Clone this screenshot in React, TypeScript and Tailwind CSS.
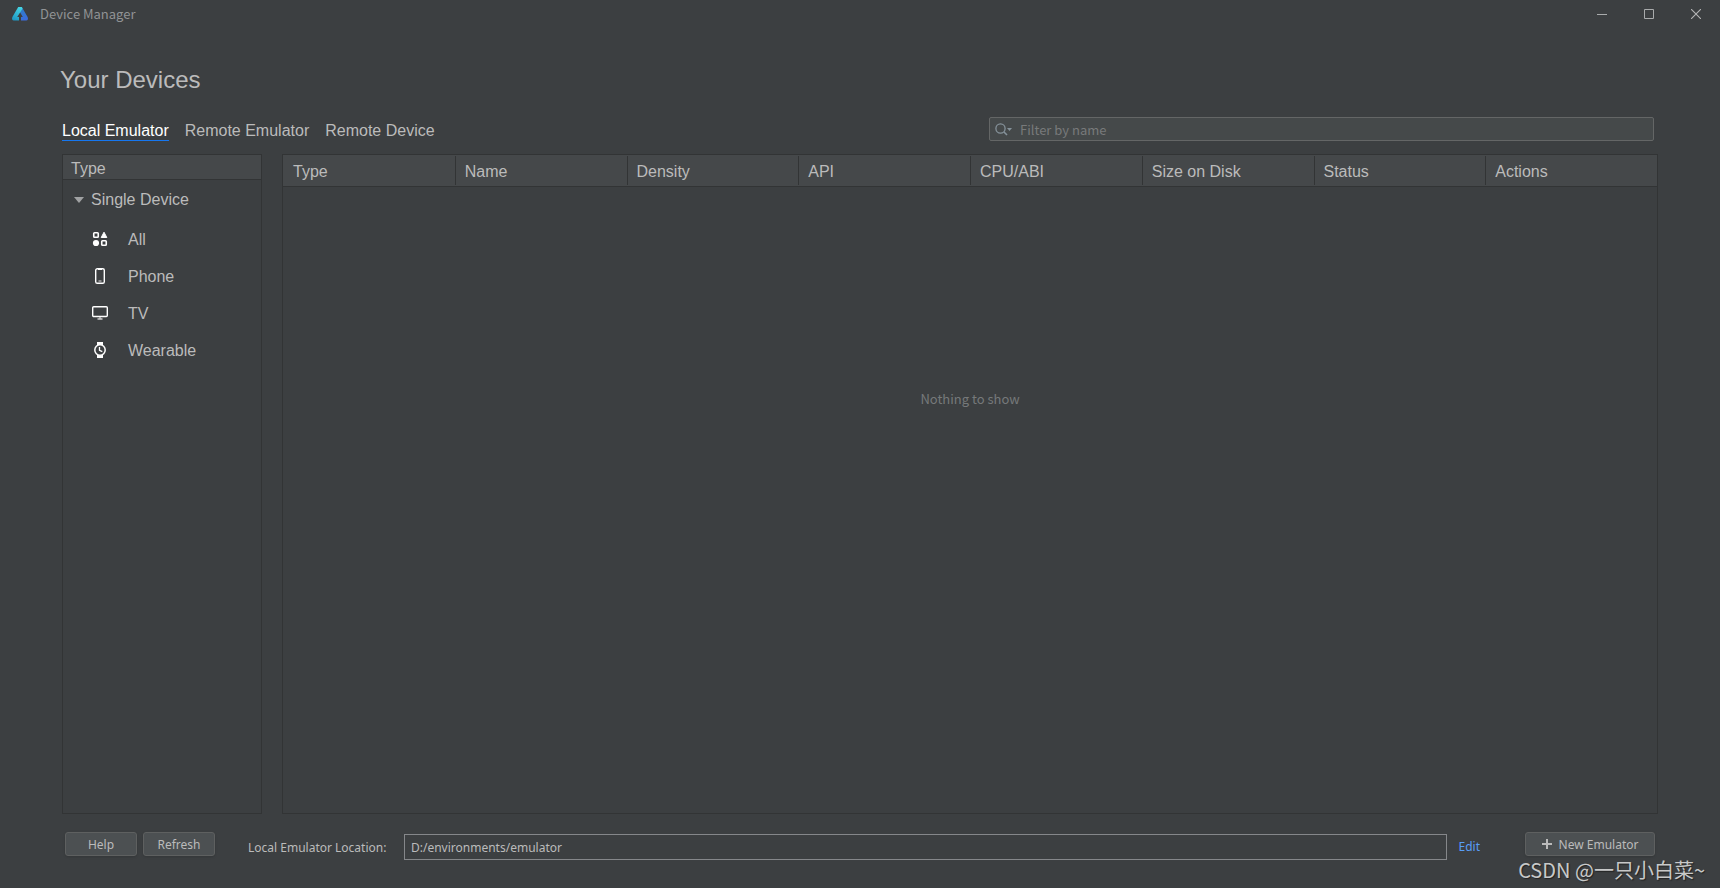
import React, { useState } from 'react'

interface DeviceType {
  name: string
  icon: React.ReactNode
}

const tabs = ['Local Emulator', 'Remote Emulator', 'Remote Device']

const columns = [
  'Type',
  'Name',
  'Density',
  'API',
  'CPU/ABI',
  'Size on Disk',
  'Status',
  'Actions',
]

const deviceTypes: DeviceType[] = [
  {
    name: 'All',
    icon: (
      <svg width="16" height="16" viewBox="0 0 16 16" fill="none">
        <rect x="1.75" y="1.75" width="4.5" height="4.5" rx="0.8" stroke="#fff" strokeWidth="1.6" />
        <path d="M12 1.2 14.8 6.5H9.2Z" fill="#fff" stroke="#fff" strokeWidth="1" strokeLinejoin="round" />
        <circle cx="4" cy="12" r="3.1" fill="#fff" />
        <rect x="9.75" y="9.75" width="4.5" height="4.5" rx="0.8" stroke="#fff" strokeWidth="1.6" />
      </svg>
    ),
  },
  {
    name: 'Phone',
    icon: (
      <svg width="16" height="16" viewBox="0 0 16 16" fill="none">
        <rect x="3.7" y="0.7" width="8.6" height="14.6" rx="1.6" stroke="#fff" strokeWidth="1.4" />
        <path d="M6 1.5h4" stroke="#fff" />
        <path d="M6.5 13h3" stroke="#aaa" strokeWidth="1.5" />
      </svg>
    ),
  },
  {
    name: 'TV',
    icon: (
      <svg width="16" height="16" viewBox="0 0 16 16" fill="none">
        <rect x="0.7" y="1.7" width="14.6" height="9.8" rx="1" stroke="#fff" strokeWidth="1.4" />
        <path d="M8 12v2M5.5 14h5" stroke="#ccc" strokeWidth="1.4" />
      </svg>
    ),
  },
  {
    name: 'Wearable',
    icon: (
      <svg width="16" height="16" viewBox="0 0 16 16" fill="none">
        <path d="M5 0h6v4H5ZM5 12h6v4H5Z" fill="#fff" />
        <circle cx="8" cy="8" r="5.2" fill="#3c3f41" stroke="#fff" strokeWidth="1.5" />
        <path d="M7.5 5v3.3l2.8 1.3" stroke="#fff" strokeWidth="1.3" />
      </svg>
    ),
  },
]

const Logo = () => (
  <svg width="16" height="14" viewBox="0 0 16 14" fill="none">
    <defs>
      <linearGradient id="left" x1="8" y1="0" x2="2" y2="14" gradientUnits="userSpaceOnUse">
        <stop stopColor="#46d6e4" />
        <stop offset="1" stopColor="#1c93c0" />
      </linearGradient>
      <linearGradient id="right" x1="9" y1="1" x2="14" y2="14" gradientUnits="userSpaceOnUse">
        <stop stopColor="#2c7fc4" />
        <stop offset="1" stopColor="#3d6ae0" />
      </linearGradient>
    </defs>
    <path d="M9.8 0 15.6 10 16 11.6Q16 13.4 14.4 13.6H9V10h1.8L7.6 4.6Z" fill="url(#right)" />
    <path d="M6.2 0h3.6L10.6 1.4 8.4 5 5.2 10H7v3.6H1.6Q0 13.4 0 11.6L.4 10Z" fill="url(#left)" />
  </svg>
)

const TitleBar = () => (
  <header className="flex h-7 items-center pr-px pl-3 text-[#919395]">
    <Logo />
    <span className="ml-3 grow">Device Manager</span>
    <button aria-label="Minimize" className="flex h-7 w-[47px] items-center justify-center">
      <svg width="10" height="10" viewBox="0 0 10 10">
        <path d="M0 5.5h10" stroke="#a9abac" />
      </svg>
    </button>
    <button aria-label="Maximize" className="flex h-7 w-[47px] items-center justify-center">
      <svg width="10" height="10" viewBox="0 0 10 10">
        <path d="M.5.5h9v9h-9Z" fill="none" stroke="#a9abac" />
      </svg>
    </button>
    <button aria-label="Close" className="flex h-7 w-[47px] items-center justify-center">
      <svg width="10" height="10" viewBox="0 0 10 10">
        <path d="m0 0 10 10M10 0 0 10" stroke="#b4b5b6" strokeWidth="1.1" />
      </svg>
    </button>
  </header>
)

const Sidebar = () => (
  <aside className="flex w-[200px] shrink-0 flex-col border border-[#323435] font-['Liberation_Sans',Arial,sans-serif] text-base">
    <h2 className="h-[25px] border-b border-[#323435] bg-[#45484a] px-2 leading-7">Type</h2>
    <button className="flex h-10 items-center pl-[11px]">
      <svg width="10" height="6" viewBox="0 0 10 6">
        <path d="M0 0h10L5 6Z" fill="#a0a2a3" />
      </svg>
      <span className="ml-[7px]">Single Device</span>
    </button>
    <ul>
      {deviceTypes.map((type) => (
        <li key={type.name}>
          <button className="flex h-[37px] w-full items-center gap-5 pl-[29px]">
            {type.icon}
            <span className="pt-0.5">{type.name}</span>
          </button>
        </li>
      ))}
    </ul>
  </aside>
)

const DeviceTable = () => (
  <section className="flex grow flex-col border border-[#323435]">
    <table className="w-full table-fixed border-collapse">
      <thead>
        <tr className="border-b border-[#323435] bg-[#45484a]">
          {columns.map((column) => (
            <th key={column} className="group py-px text-left font-normal">
              <div className="h-[29px] border-l border-[#323435] pl-[9px] font-['Liberation_Sans',Arial,sans-serif] text-base leading-8 group-first:border-transparent">
                {column}
              </div>
            </th>
          ))}
        </tr>
      </thead>
    </table>
    <div className="grow" />
    <p className="text-center leading-[18px] text-[#76797a]">Nothing to show</p>
    <div className="grow-2" />
  </section>
)

const App = () => {
  const [activeTab, setActiveTab] = useState(tabs[0])
  const [filter, setFilter] = useState('')

  return (
    <div className="relative flex min-h-screen flex-col bg-[#3c3f41] font-['Noto_Sans_CJK_SC',sans-serif] text-[13px] text-[#bbbbbb]">
      <TitleBar />
      <main className="flex grow flex-col px-[62px]">
        <h1 className="mt-9 -ml-0.5 font-['Liberation_Sans',Arial,sans-serif] text-2xl leading-8">
          Your Devices
        </h1>
        <div className="mt-5 flex h-[26px] items-center justify-between">
          <nav className="flex gap-4 pt-1 font-['Liberation_Sans',Arial,sans-serif] text-base leading-[18px]">
            {tabs.map((tab) => (
              <button
                key={tab}
                onClick={() => setActiveTab(tab)}
                className={
                  tab === activeTab
                    ? 'border-b border-[#1677f0] text-white'
                    : 'border-b border-transparent'
                }
              >
                {tab}
              </button>
            ))}
          </nav>
          <label className="mr-1 flex h-6 w-5/12 items-center gap-2 rounded-xs border border-[#646666] bg-[#45494a] pl-[5px]">
            <svg width="17" height="13" viewBox="0 0 17 13" fill="none" className="shrink-0">
              <circle cx="5.5" cy="5.5" r="4.6" stroke="#85929a" strokeWidth="1.3" />
              <path d="m9 9 3 3" stroke="#85929a" strokeWidth="1.6" />
              <path d="M12 5h5l-2.5 3Z" fill="#85929a" />
            </svg>
            <input
              aria-label="Filter by name"
              placeholder="Filter by name"
              value={filter}
              onChange={(e) => setFilter(e.target.value)}
              className="w-full bg-transparent pt-px outline-none placeholder:text-[#787a7b]"
            />
          </label>
        </div>
        <div className="mt-3 flex grow gap-5">
          <Sidebar />
          <DeviceTable />
        </div>
      </main>
      <footer className="flex h-[74px] items-start px-[65px] pt-[18px] font-['Noto_Sans',sans-serif] text-xs">
        <button className="h-6 w-[72px] rounded-[3px] border border-[#5e6060] bg-[#4c5052] pt-px shadow-sm">
          Help
        </button>
        <button className="ml-1.5 h-6 w-[72px] rounded-[3px] border border-[#5e6060] bg-[#4c5052] pt-px shadow-sm">
          Refresh
        </button>
        <label htmlFor="location" className="mt-1 ml-[33px] w-[156px] leading-6">
          Local Emulator Location:
        </label>
        <input
          id="location"
          readOnly
          value="D:/environments/emulator"
          className="mt-0.5 h-[26px] grow border border-[#85878a] bg-transparent px-1.5 outline-none"
        />
        <a href="#edit" className="mt-[3px] ml-3 leading-6 text-[#589df6]">
          Edit
        </a>
        <button className="ml-[45px] flex h-6 w-[130px] items-center justify-center gap-[7px] rounded-[3px] border border-[#5e6060] bg-[#4c5052] shadow-sm">
          <svg width="10" height="10" viewBox="0 0 10 10">
            <path d="M5 0v10M0 5h10" stroke="#bbb" strokeWidth="2" />
          </svg>
          <span className="pt-px">New Emulator</span>
        </button>
      </footer>
      <span className="absolute right-[15px] bottom-1 text-xl leading-7 text-[#c8c9c9] [text-shadow:1px_1px_1px_#222]">
        CSDN @一只小白菜~
      </span>
    </div>
  )
}

export default App
